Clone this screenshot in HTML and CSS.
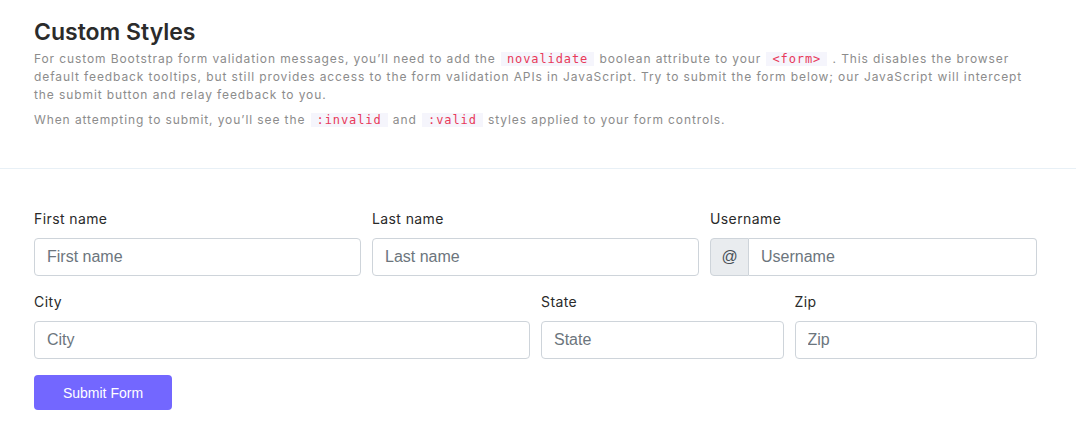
FILE: index.html
```html
<!DOCTYPE html>
<html>
<head>
<meta charset="utf-8">
<link rel="stylesheet" href="styles.css">
</head>
<body>
<div class="card">
  <div class="card-header">
    <h4 class="title">Custom Styles</h4>
    <p class="desc">For custom Bootstrap form validation messages, you’ll need to add the <code>novalidate</code> boolean attribute to your <code>&lt;form&gt;</code> . This disables the browser default feedback tooltips, but still provides access to the form validation APIs in JavaScript. Try to submit the form below; our JavaScript will intercept the submit button and relay feedback to you.</p>
    <p class="desc second">When attempting to submit, you’ll see the <code>:invalid</code> and <code>:valid</code> styles applied to your form controls.</p>
  </div>
  <div class="card-body">
    <form class="form" novalidate>
      <div class="row">
        <div class="field span4">
          <label class="label">First name</label>
          <input class="input" type="text" placeholder="First name">
        </div>
        <div class="field span4">
          <label class="label">Last name</label>
          <input class="input" type="text" placeholder="Last name">
        </div>
        <div class="field span4">
          <label class="label">Username</label>
          <div class="input-group">
            <span class="prefix">@</span>
            <input class="input grouped" type="text" placeholder="Username">
          </div>
        </div>
        <div class="field span6">
          <label class="label">City</label>
          <input class="input" type="text" placeholder="City">
        </div>
        <div class="field span3">
          <label class="label">State</label>
          <input class="input" type="text" placeholder="State">
        </div>
        <div class="field span3">
          <label class="label">Zip</label>
          <input class="input" type="text" placeholder="Zip">
        </div>
      </div>
      <button class="btn" type="button">Submit Form</button>
    </form>
  </div>
</div>
</body>
</html>
```

FILE: styles.css
```css
* { box-sizing: border-box; }
body {
  margin: 0;
  background: #ffffff;
  font-family: "Inter", "Roboto", sans-serif;
}
.card-header {
  padding: 17px 39px 39px 34px;
  border-bottom: 1px solid #e8f0f6;
}
.title {
  margin: 0 0 3px 0;
  font-family: "Inter", sans-serif;
  font-size: 23px;
  line-height: 30px;
  font-weight: 600;
  color: #2b2b2b;
  letter-spacing: 0;
}
.desc {
  margin: 0;
  font-family: "Inter", sans-serif;
  font-size: 12px;
  line-height: 18px;
  color: #8c8c8c;
  letter-spacing: 0.9px;
}
.desc.second { margin-top: 7px; }
code {
  font-family: "DejaVu Sans Mono", monospace;
  font-size: 12px;
  color: #e8395a;
  background: #f5f5fc;
  padding: 0 6px;
  margin: 0 1px;
}
.card-body {
  padding: 40px 39px 30px 34px;
}
.row {
  display: grid;
  grid-template-columns: repeat(12, 1fr);
  column-gap: 11px;
  row-gap: 16px;
}
.span4 { grid-column: span 4; }
.span6 { grid-column: span 6; }
.span3 { grid-column: span 3; }
.field { display: flex; flex-direction: column; }
.label {
  font-family: "Inter", sans-serif;
  font-size: 14px;
  line-height: 20px;
  color: #2a2a2a;
  letter-spacing: 0.4px;
  margin-bottom: 9px;
}
.input {
  height: 38px;
  width: 100%;
  border: 1px solid #ced4da;
  border-radius: 4px;
  padding: 0 12px;
  font-family: "Liberation Sans", Arial, sans-serif;
  font-size: 16px;
  color: #495057;
  background: #fff;
  outline: none;
}
.input::placeholder { color: #6c757d; }
.input-group { display: flex; }
.prefix {
  width: 39px;
  height: 38px;
  display: flex;
  align-items: center;
  justify-content: center;
  background: #e9ecef;
  border: 1px solid #ced4da;
  border-radius: 4px 0 0 4px;
  font-family: "Liberation Sans", Arial, sans-serif;
  font-size: 16px;
  color: #495057;
  flex: none;
}
.input.grouped {
  border-left: none;
  border-radius: 0 4px 4px 0;
}
.btn {
  margin-top: 16px;
  width: 138px;
  height: 35px;
  border: none;
  border-radius: 4px;
  background: #7367ff;
  color: #ffffff;
  font-family: "Liberation Sans", Arial, sans-serif;
  font-size: 14px;
}
```
